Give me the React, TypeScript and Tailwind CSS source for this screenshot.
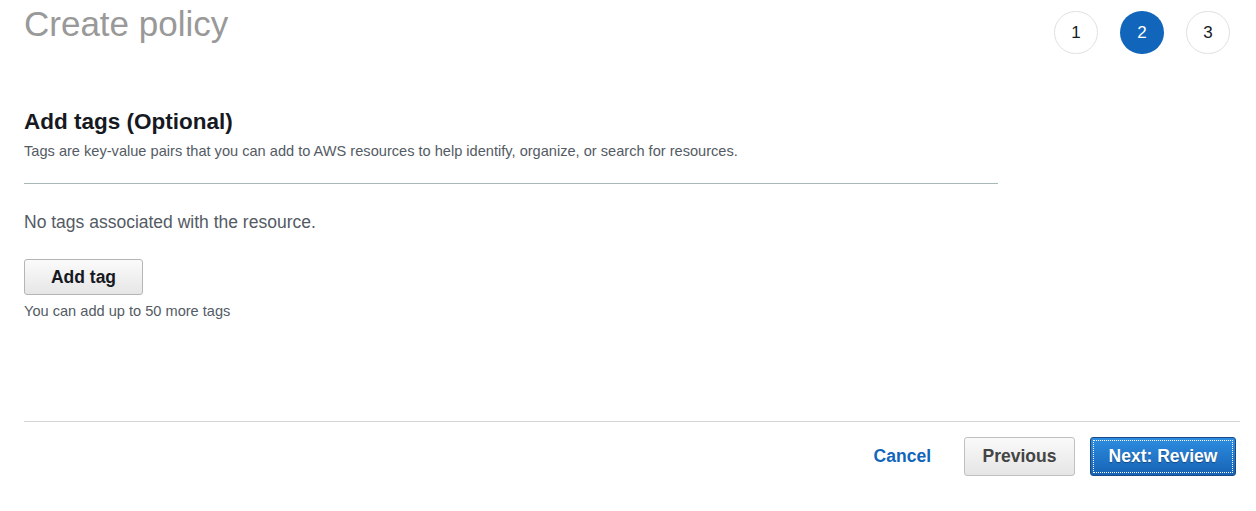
import React from "react";

const font = { fontFamily: '"Liberation Sans", Arial, sans-serif' };

export default function App() {
  return (
    <div className="w-[1256px] h-[511px] bg-white overflow-hidden" style={font}>
      <div className="pl-6 pr-[16px]">
        <div className="flex items-start justify-between">
          <h1 className="text-[35px] leading-[48px] text-[#999999] font-normal">Create policy</h1>
          <div className="flex gap-[22px] pt-[11px] pr-[10px]">
            <div className="w-[44px] h-[43px] rounded-full border border-[#e0e0e0] flex items-center justify-center text-[17px] text-[#16191f]">1</div>
            <div className="w-[44px] h-[43px] rounded-full bg-[#1166bb] flex items-center justify-center text-[17px] text-white">2</div>
            <div className="w-[44px] h-[43px] rounded-full border border-[#e0e0e0] flex items-center justify-center text-[17px] text-[#16191f]">3</div>
          </div>
        </div>

        <div className="mt-[54px] w-[974px]">
          <h2 className="text-[22.5px] leading-[28px] font-bold text-[#16191f]">Add tags (Optional)</h2>
          <p className="mt-[6px] text-[14.6px] leading-[18px] text-[#545b64]">
            Tags are key-value pairs that you can add to AWS resources to help identify, organize, or search for resources.
          </p>
          <div className="mt-[23px] h-px bg-[#aab7b8]" />
        </div>

        <p className="mt-[27px] text-[17.5px] leading-[22px] text-[#545b64]">No tags associated with the resource.</p>

        <button
          className="mt-[26px] w-[119px] h-[36px] rounded-[3px] border border-[#b5b5b5] bg-gradient-to-b from-[#fbfbfb] to-[#e6e6e6] text-[17.5px] font-bold text-[#16191f] flex items-center justify-center"
          style={font}
        >
          Add tag
        </button>
        <p className="mt-[7px] text-[14.6px] leading-[18px] text-[#545b64]">You can add up to 50 more tags</p>

        <div className="mt-[101px] h-px bg-[#d5d5d5]" />

        <div className="mt-[15px] flex items-center justify-end gap-[33px] pr-[4px]">
          <span className="text-[17.5px] font-bold text-[#1166bb]">Cancel</span>
          <div className="flex gap-[15px]">
            <button
              className="w-[111px] h-[39px] rounded-[3px] border border-[#c0c0c0] bg-gradient-to-b from-[#fafafa] to-[#e5e5e5] text-[17.5px] font-bold text-[#444444] flex items-center justify-center"
              style={font}
            >
              Previous
            </button>
            <button
              className="w-[146px] h-[39px] rounded-[3px] border border-[#174a86] bg-gradient-to-b from-[#2e8de0] to-[#1663b5] p-[2px]"
              style={font}
            >
              <div className="w-full h-full border border-dotted border-white rounded-[1px] flex items-center justify-center text-[17.5px] font-bold text-white [text-shadow:0_1px_1px_rgba(0,0,0,0.35)]">
                Next: Review
              </div>
            </button>
          </div>
        </div>
      </div>
    </div>
  );
}
